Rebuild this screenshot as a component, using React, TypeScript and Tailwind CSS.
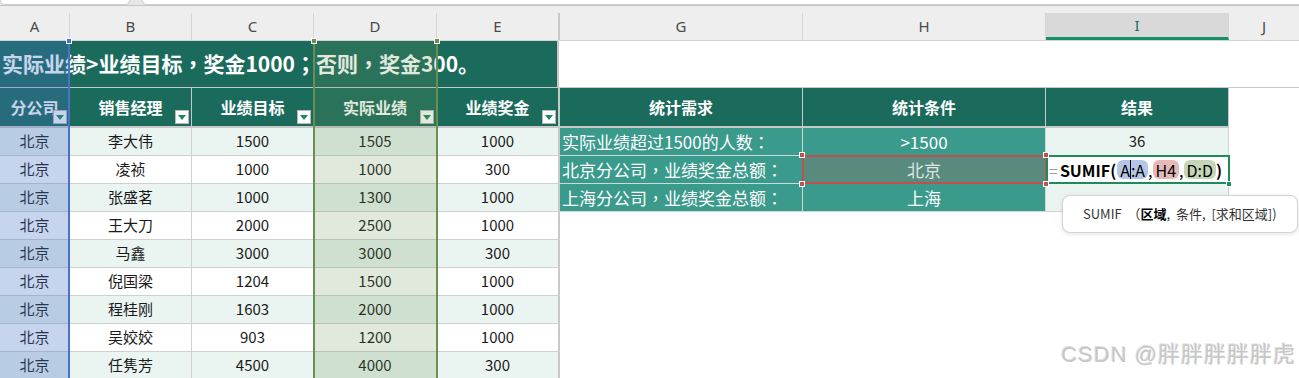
import React from "react";

const rows: [string, number, number, number][] = [
  ["李大伟", 1500, 1505, 1000],
  ["凌祯", 1000, 1000, 300],
  ["张盛茗", 1000, 1300, 1000],
  ["王大刀", 2000, 2500, 1000],
  ["马鑫", 3000, 3000, 300],
  ["倪国梁", 1204, 1500, 1000],
  ["程桂刚", 1603, 2000, 1000],
  ["吴姣姣", 903, 1200, 1000],
  ["任隽芳", 4500, 4000, 300],
];

// punctuation is centred in the original, so it is set in the TC face
const P = ({ c }: { c: string }) => (
  <span className="font-['Noto_Sans_CJK_TC',sans-serif]">{c}</span>
);

const stats: [React.ReactNode, string][] = [
  [<>实际业绩超过1500的人数<P c="：" /></>, ">1500"],
  [<>北京分公司<P c="，" />业绩奖金总额<P c="：" /></>, "北京"],
  [<>上海分公司<P c="，" />业绩奖金总额<P c="：" /></>, "上海"],
];

const FilterButton = () => (
  <div className="absolute bottom-[2px] right-[2px] flex h-[14px] w-[14px] items-center justify-center border border-[#b8b8b8] bg-white">
    <svg width="8" height="5" viewBox="0 0 8 5">
      <path d="M0 0h8L4 5z" fill="#1d8a5e" />
    </svg>
  </div>
);

const Handle = ({ className, color }: { className: string; color: string }) => (
  <div className={`absolute h-[6px] w-[6px] border border-white ${color} ${className}`} />
);

export default function App() {
  const letters = [
    { l: "A", w: "w-[70px]" },
    { l: "B", w: "w-[122px]" },
    { l: "C", w: "w-[122px]" },
    { l: "D", w: "w-[123px]" },
    { l: "E", w: "w-[123px]" },
    { l: "G", w: "w-[243px]" },
    { l: "H", w: "w-[243px]" },
    { l: "I", w: "w-[183px]" },
  ];

  return (
    <div className="relative h-[378px] w-[1299px] overflow-hidden bg-white font-['Noto_Sans_CJK_SC','Noto_Sans',sans-serif] text-[#1a1a1a]">
      {/* window tabs strip */}
      <div className="flex h-[6px] border-b border-[#c4c4c4] bg-[#e6e6e6]">
        <div className="w-[130px] rounded-b-md border-x border-b border-[#d0d0d0] bg-white" />
        <div className="ml-[12px] flex-1 rounded-bl-md border-b border-l border-[#d0d0d0] bg-white" />
      </div>

      {/* column letters */}
      <div className="flex h-[35px] border-b border-[#d2d2d2] bg-[#eeeeee] font-['Noto_Sans',sans-serif] text-[15px] text-[#4a4a4a]">
        {letters.map(({ l, w }) => (
          <div key={l} className={`${w} flex flex-col pt-[7px]`}>
            <div
              className={`flex flex-1 items-center justify-center ${
                l === "E" ? "border-r-2 border-[#c8c8c8]" : "border-r border-[#d6d6d6]"
              } ${l === "I" ? "border-b-[3px] border-b-[#15916a] bg-[#d9d9d9] text-[#1e6e5a]" : ""}`}
            >
              {l}
            </div>
          </div>
        ))}
        <div className="flex flex-1 items-center justify-center pt-[7px]">J</div>
      </div>

      {/* row 1 title */}
      <div className="flex h-[47px]">
        <div className="flex w-[559px] items-center border-r-2 border-b border-[#c8c8c8] bg-[#1b6b5d] pl-[2px] text-[21px] font-bold whitespace-nowrap text-white">
          实际业绩&gt;业绩目标<P c="，" />奖金1000<P c="；" />否则<P c="，" />奖金300。
        </div>
        <div className="flex-1 border-b border-[#c8c8c8]" />
      </div>

      {/* row 2 header */}
      <div className="flex h-[40px] text-[16px] font-bold text-white">
        {[
          ["分公司", "w-[70px]"],
          ["销售经理", "w-[122px]"],
          ["业绩目标", "w-[122px]"],
          ["实际业绩", "w-[123px]"],
          ["业绩奖金", "w-[123px] border-r-2 border-r-[#c8c8c8]"],
        ].map(([t, w]) => (
          <div
            key={t}
            className={`relative flex ${w} items-center justify-center border-r border-b-2 border-[#c8c8c8] bg-[#1b6b5d]`}
          >
            {t}
            <FilterButton />
          </div>
        ))}
        {[
          ["统计需求", "w-[243px]"],
          ["统计条件", "w-[243px]"],
          ["结果", "w-[183px]"],
        ].map(([t, w]) => (
          <div
            key={t}
            className={`flex ${w} items-center justify-center border-r border-b-2 border-[#c8c8c8] bg-[#1b6b5d]`}
          >
            {t}
          </div>
        ))}
        <div className="flex-1" />
      </div>

      {/* data rows */}
      {rows.map(([name, target, actual, bonus], i) => {
        const bg = i % 2 === 0 ? "bg-[#eaf4f1]" : "bg-white";
        const cell = `flex h-[28px] items-center justify-center border-r border-b border-[#d0d0d0] ${bg}`;
        const stat = stats[i];
        return (
          <div key={name} className="flex text-[15px]">
            <div className={`${cell} w-[70px]`}>北京</div>
            <div className={`${cell} w-[122px]`}>{name}</div>
            <div className={`${cell} w-[122px]`}>{target}</div>
            <div className={`${cell} w-[123px]`}>{actual}</div>
            <div className={`${cell} w-[123px] border-r-2 border-r-[#c8c8c8]`}>{bonus}</div>
            {stat ? (
              <>
                <div className="flex h-[28px] w-[243px] items-center border-r border-b border-[#c9dcd7] bg-[#3a9a8b] pl-[2px] text-[17px] whitespace-nowrap text-white">
                  {stat[0]}
                </div>
                <div
                  className={`flex h-[28px] w-[243px] items-center justify-center border-r border-b border-[#c9dcd7] text-[17px] ${
                    i === 1 ? "bg-[#588a7e] text-[#dde6e2]" : "bg-[#3a9a8b] text-white"
                  }`}
                >
                  {stat[1]}
                </div>
                <div
                  className={`flex h-[28px] w-[183px] items-center border-r border-b border-[#d0d0d0] ${
                    i === 1 ? "bg-white" : "justify-center bg-[#eaf4f1]"
                  }`}
                >
                  {i === 0 && "36"}
                  {i === 1 && (
                    <div className="flex items-center pl-[3px] text-[16px] text-black">
                      <span className="mr-[2px] text-[#a0a0a0]">=</span>
                      <span className="font-bold">SUMIF(</span>
                      <span className="ml-[1px] flex h-[19px] items-center rounded-md bg-[#b4c6e7] px-[3px]">
                        A<span className="h-[19px] w-px bg-black" />:A
                      </span>
                      <span>,</span>
                      <span className="flex h-[19px] items-center rounded-md bg-[#e6b9b8] px-[3px]">H4</span>
                      <span>,</span>
                      <span className="flex h-[19px] items-center rounded-md bg-[#c5d6b6] px-[3px]">D:D</span>
                      <span className="font-bold">)</span>
                    </div>
                  )}
                </div>
              </>
            ) : (
              <div className="w-[669px]" />
            )}
          </div>
        );
      })}

      {/* column A selection */}
      <div className="absolute top-[41px] left-0 h-[337px] w-[70px] border-r-2 border-[#4a72c8] bg-[rgba(68,114,196,0.3)]" />
      <Handle className="top-[38px] left-[66px]" color="bg-[#4a72c8]" />

      {/* column D selection */}
      <div className="absolute top-[41px] left-[313px] h-[337px] w-[125px] border-x-2 border-[#6a8f4e] bg-[rgba(106,143,78,0.2)]" />
      <Handle className="top-[38px] left-[311px]" color="bg-[#6a8f4e]" />
      <Handle className="top-[38px] left-[434px]" color="bg-[#6a8f4e]" />

      {/* H4 reference */}
      <div className="absolute top-[155px] left-[802px] h-[29px] w-[245px] border-2 border-[#c0504d]" />
      <Handle className="top-[152px] left-[799px]" color="bg-[#c0504d]" />
      <Handle className="top-[181px] left-[799px]" color="bg-[#c0504d]" />

      {/* I4 active cell */}
      <div className="absolute top-[155px] left-[1046px] h-[29px] w-[184px] border-2 border-[#1f8a5c]" />
      <Handle className="top-[152px] left-[1043px]" color="bg-[#c0504d]" />
      <Handle className="top-[181px] left-[1043px]" color="bg-[#c0504d]" />
      <Handle className="top-[181px] left-[1226px]" color="bg-[#1f8a5c]" />

      {/* formula tooltip */}
      <div className="absolute top-[195px] left-[1062px] flex h-[38px] w-[236px] items-center rounded-lg border border-[#d4d4d4] bg-white pl-[20px] text-[13px] whitespace-nowrap text-[#333] shadow-[0_1px_4px_rgba(0,0,0,0.12)]">
        SUMIF&nbsp;&nbsp;（<span className="font-bold text-black">区域</span>,&nbsp;&nbsp;条件,&nbsp;&nbsp;[求和区域])
      </div>

      {/* watermark */}
      <div className="absolute right-[3px] bottom-[7px] font-['Liberation_Sans','Noto_Sans_CJK_SC',sans-serif] text-[22px] tracking-[1px] text-[#c6c6c6] [text-shadow:1px_1px_0_#ffffff,-1px_-1px_0_#e0e0e0]">
        CSDN @胖胖胖胖胖虎
      </div>
    </div>
  );
}
